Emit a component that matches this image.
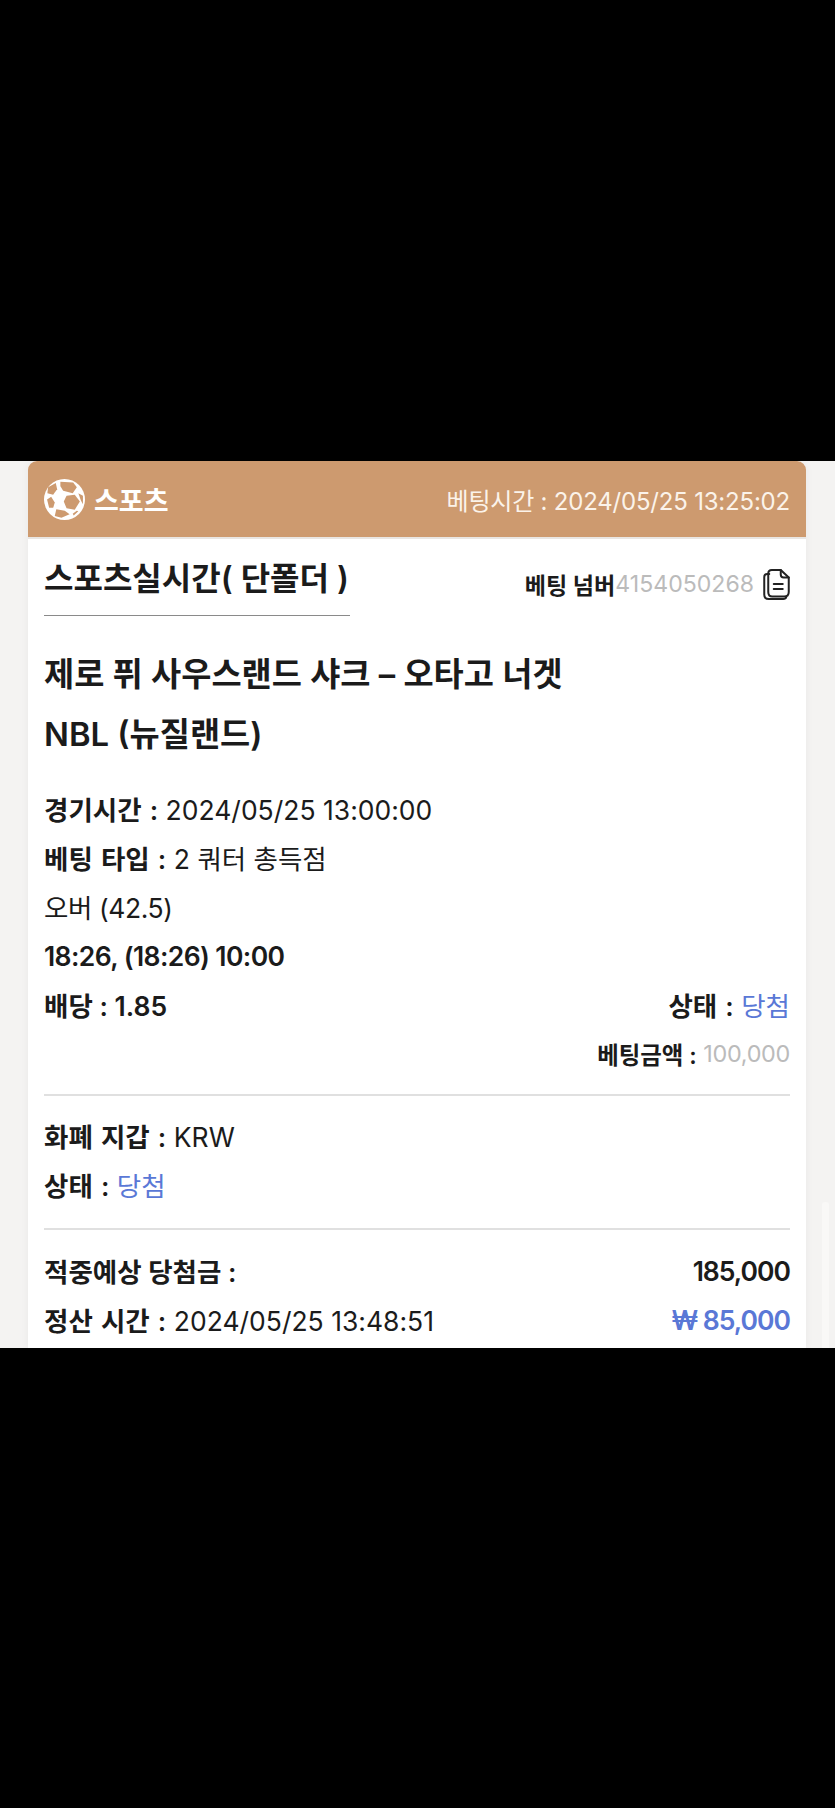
<script lang="ts">
  // Bet slip card, cut off by black bars above and below
</script>

<div class="screen">
  <div class="bar top"></div>
  <div class="view">
    <div class="card">
      <header class="head">
        <div class="sport">
          <svg class="ball" viewBox="0 0 40 40" width="41" height="41">
            <circle cx="20" cy="20" r="20" fill="#fff" />
            <g fill="#cd9a6f">
              <path d="M4 8 L11.5 4 L12.8 10 L8.9 15.4 L3.3 13.8Z" />
              <path d="M16 2.6 L28.5 3.3 L32 8 L28 14 L18.7 11.5 L16 7Z" />
              <path d="M22 16.4 L30 15.4 L35 22 L30 30 L22 28.5 L19.3 22Z" />
              <path d="M12 29.5 L20.3 31 L25 34.5 L17 37.7 L10.5 36Z" />
              <path d="M3 20 L7 17.4 L10.5 23 L9 28 L5 28Z" />
              <path d="M33.5 14 L38 16.4 L38 24.6 L36 21Z" />
              <path d="M32 31 L33.5 31.5 L29 35.5 L28 34Z" />
            </g>
          </svg>
          <span>스포츠</span>
        </div>
        <div class="bet-time">베팅시간 : 2024/05/25 13:25:02</div>
      </header>

      <div class="body">
        <div class="title-row">
          <h2>스포츠실시간( 단폴더 )</h2>
          <div class="ticket">
            <b>베팅 넘버</b><span class="muted">4154050268</span>
            <svg viewBox="1 0.5 26.5 31" width="27" height="31" fill="none" stroke="#222" stroke-width="2" stroke-linejoin="round" stroke-linecap="round">
              <path d="M7 5.5 H5 Q2 5.5 2 8.5 V26 Q2 30.5 6.5 30.5 H21 Q23.5 30.5 24 28.5" />
              <path d="M9.5 1.5 H18.5 L26.5 9 V23.5 Q26.5 28 22 28 H10 Q6 28 6 23.5 V5 Q6 1.5 9.5 1.5Z" />
              <path d="M18.5 1.5 V6 Q18.5 9 21.5 9 H26.5" />
              <path d="M11.5 15.5 H20.5 M11.5 20.5 H20.5" />
            </svg>
          </div>
        </div>

        <h1 class="match">제로 퓌 사우스랜드 샤크 – 오타고 너겟</h1>
        <h1>NBL (뉴질랜드)</h1>

        <div class="rows first">
          <div class="row"><span><b>경기시간 :</b> 2024/05/25 13:00:00</span></div>
          <div class="row"><span><b>베팅 타입 :</b> 2 쿼터 총득점</span></div>
          <div class="row"><span class="pick">오버 (42.5)</span></div>
          <div class="row"><b class="num">18:26, (18:26) 10:00</b></div>
          <div class="row split"><b>배당 : 1.85</b><span><b>상태 :</b> <span class="blue">당첨</span></span></div>
          <div class="row small"><b>베팅금액 :</b>&nbsp;<span class="muted stake">100,000</span></div>
        </div>

        <hr class="first-rule" />

        <div class="rows">
          <div class="row"><span><b>화폐 지갑 :</b> KRW</span></div>
          <div class="row"><span><b>상태 :</b> <span class="blue">당첨</span></span></div>
        </div>

        <hr class="second-rule" />

        <div class="rows">
          <div class="row split"><b>적중예상 당첨금 :</b><b class="amount">185,000</b></div>
          <div class="row split"><span><b>정산 시간 :</b> 2024/05/25 13:48:51</span><b class="blue amount">₩ 85,000</b></div>
        </div>
      </div>
    </div>
    <div class="scroll-thumb"></div>
  </div>
  <div class="bar bottom"></div>
</div>

<style>
  :global(body) {
    margin: 0;
    background: #000;
  }
  .screen {
    display: flex;
    flex-direction: column;
    height: 1808px;
    font-family: Inter, "Noto Sans CJK KR", sans-serif;
    color: #1b1b1b;
  }
  .bar { background: #000; }
  .top { height: 461px; }
  .bottom { flex: 1; }
  .view {
    position: relative;
    height: 887px;
    overflow: hidden;
    background: #f4f3f2;
    padding: 0 29px 0 28px;
  }
  .scroll-thumb {
    position: absolute;
    top: 741px;
    right: 6px;
    bottom: 0;
    width: 7px;
    border-radius: 3px 3px 0 0;
    background: #f9f8f7;
  }
  .card {
    background: #fff;
    border-radius: 9px 9px 0 0;
    box-shadow: 0 0 8px rgba(0, 0, 0, 0.05);
    min-height: 100%;
  }
  .head {
    height: 76px;
    background: #cd9a6f;
    border-radius: 9px 9px 0 0;
    border-bottom: 2px solid #e9e6e3;
    display: flex;
    align-items: center;
    justify-content: space-between;
    padding: 0 16px;
    color: #fff;
  }
  .sport {
    display: flex;
    align-items: center;
    gap: 9px;
    font-size: 27px;
    font-weight: 700;
  }
  .bet-time {
    font-size: 24px;
    letter-spacing: -0.2px;
    color: #fbf3ea;
  }
  .body { padding: 0 16px; }
  .title-row {
    display: flex;
    align-items: flex-start;
    justify-content: space-between;
    padding-top: 19px;
  }
  h2 {
    margin: 0;
    font-size: 32px;
    font-weight: 600;
    line-height: 42px;
    padding: 0 1px 15px 0;
    border-bottom: 1px solid #8a8a8a;
  }
  .ticket {
    display: flex;
    align-items: center;
    font-size: 23.1px;
    padding-top: 9px;
  }
  .ticket svg { margin-left: 9px; }
  h1 {
    margin: 0;
    font-size: 32.8px;
    font-weight: 600;
    line-height: 60px;
  }
  .match { margin-top: 28px; }
  .rows { display: flex; flex-direction: column; }
  .first { margin-top: 20px; }
  .row {
    display: flex;
    height: 49px;
    align-items: center;
    font-size: 26.5px;
    white-space: pre-wrap;
  }
  .row b { font-weight: 600; }
  .row > span > b { word-spacing: 1.5px; }
  .row .num { letter-spacing: -0.6px; }
  .row .amount { letter-spacing: -1px; }
  .pick { letter-spacing: -0.4px; }
  .split { justify-content: space-between; }
  .row.small { justify-content: flex-end; font-size: 23.4px; }
  .stake { letter-spacing: -0.3px; }
  .muted { color: #bbb; }
  .blue { color: #5a78d6; }
  hr {
    border: 0;
    height: 2px;
    background: #e0e0e0;
  }
  .first-rule { margin: 16px 0 15px; }
  .second-rule { margin: 19px 0 16px; }
</style>
